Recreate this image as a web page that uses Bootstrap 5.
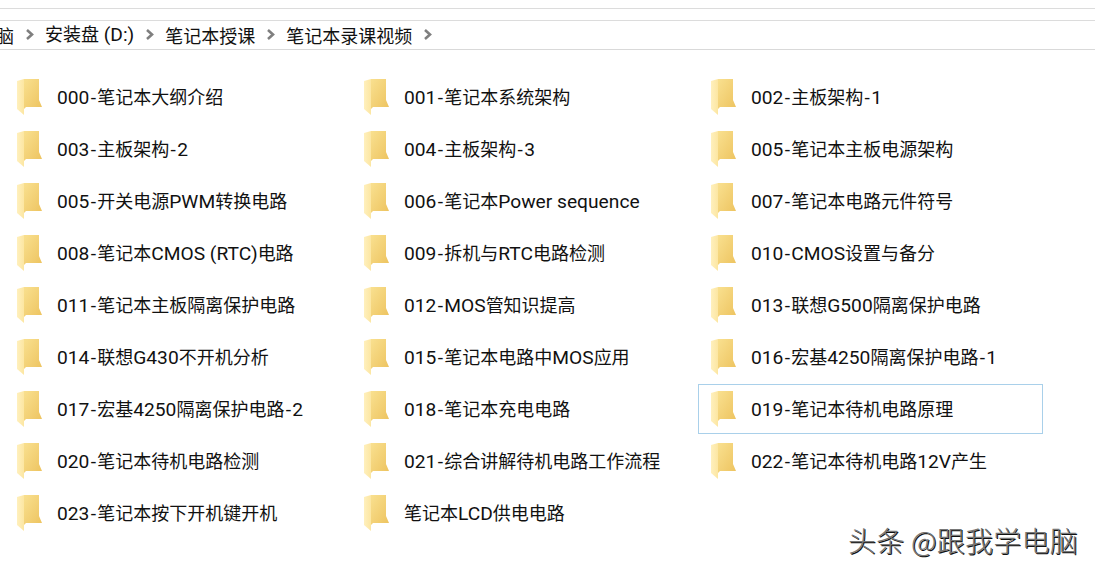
<!DOCTYPE html>
<html lang="zh-CN">
<head>
  <meta charset="UTF-8" />
  <meta name="viewport" content="width=device-width, initial-scale=1.0"/>
  <title>笔记本录课视频</title>
  <link href="https://cdn.jsdelivr.net/npm/bootstrap@5.3.2/dist/css/bootstrap.min.css" rel="stylesheet"/>
  <style>
    body {
      background: #fff;
      color: #111;
      width: 1095px;
      height: 573px;
      overflow: hidden;
      font-family: "Noto Sans CJK SC", sans-serif;
      font-size: 18px;
    }
    .top-strip {
      height: 13px;
      margin-top: 8px;
      border-top: 1px solid #dcdcdc;
      border-bottom: 1px solid #dcdcdc;
    }
    .crumbs {
      height: 29px;
      border-bottom: 1px solid #d9d9d9;
      margin-left: -4px;
      line-height: 1;
      padding-bottom: 1px;
    }
    .chev { width: 9px; height: 11px; margin: 0 11px; }
    .file-grid {
      display: grid;
      grid-template-columns: repeat(3, 345px);
      column-gap: 2px;
      grid-auto-rows: 50px;
      row-gap: 2px;
      padding: 22px 0 0 4px;
    }
    .file-item {
      padding-left: 12px;
      border: 1px solid transparent;
      line-height: 1;
    }
    .file-item.picked { border-color: #a9d0ea; }
    .folder-ic { width: 26px; height: 38px; margin-right: 14px; flex: none; }
    .latin { font-family: Roboto, sans-serif; font-size: 19.2px; }
    .dash { padding: 0 1.3px; }
    .mark-text {
      right: 17px;
      top: 526px;
      font-size: 28px;
      letter-spacing: .25px;
      line-height: 1;
      font-weight: 300;
      color: #777;
      text-shadow: 1px 1px 0 #111, -1px -1px 0 #fff;
    }
  </style>
</head>
<body class="position-relative">

  <div class="top-strip"></div>

  <!-- Address bar -->
  <div id="crumbs" class="crumbs d-flex align-items-center text-nowrap"></div>

  <!-- Folder list -->
  <div id="fileGrid" class="file-grid"></div>

  <div class="mark-text position-absolute text-nowrap">头条 @跟我学电脑</div>

  <svg width="0" height="0" class="position-absolute">
    <defs>
      <linearGradient id="backFill" x1="0" y1="0" x2="1" y2="1">
        <stop offset="0" stop-color="#f9e08f"/>
        <stop offset="1" stop-color="#edc35f"/>
      </linearGradient>
      <linearGradient id="flapFill" x1="0" y1="0" x2="1" y2="0">
        <stop offset="0" stop-color="#fff0bd"/>
        <stop offset="1" stop-color="#fce6a2"/>
      </linearGradient>
    </defs>
  </svg>

  <script src="https://cdn.jsdelivr.net/npm/bootstrap@5.3.2/dist/js/bootstrap.bundle.min.js"></script>
  <script>
    const crumbs = ["脑", "安装盘 (D:)", "笔记本授课", "笔记本录课视频"];
    const folders = [
      "000-笔记本大纲介绍", "001-笔记本系统架构", "002-主板架构-1",
      "003-主板架构-2", "004-主板架构-3", "005-笔记本主板电源架构",
      "005-开关电源PWM转换电路", "006-笔记本Power sequence", "007-笔记本电路元件符号",
      "008-笔记本CMOS (RTC)电路", "009-拆机与RTC电路检测", "010-CMOS设置与备分",
      "011-笔记本主板隔离保护电路", "012-MOS管知识提高", "013-联想G500隔离保护电路",
      "014-联想G430不开机分析", "015-笔记本电路中MOS应用", "016-宏基4250隔离保护电路-1",
      "017-宏基4250隔离保护电路-2", "018-笔记本充电电路", "019-笔记本待机电路原理",
      "020-笔记本待机电路检测", "021-综合讲解待机电路工作流程", "022-笔记本待机电路12V产生",
      "023-笔记本按下开机键开机", "笔记本LCD供电电路"
    ];

    const chevron = `<svg class="chev" viewBox="0 0 9 11"><path d="M2 1l5 4.5L2 10" fill="none" stroke="#7f7f7f" stroke-width="2.6"/></svg>`;
    const folderIcon = `<svg class="folder-ic" viewBox="0 0 26 38">
      <path d="M7 1H22V22L25 29H9L7 31Z" fill="url(#backFill)"/>
      <path d="M0 3L7 1V37L0 31Z" fill="url(#flapFill)"/>
    </svg>`;

    // latin runs are set a bit larger than the cjk ones, the hyphen is wider in the original font
    function withLatin(text) {
      return text.replace(/[\x00-\x7f]+/g, m =>
        `<span class="latin">${m.replace(/-/g, '<span class="dash">-</span>')}</span>`);
    }

    document.getElementById("crumbs").innerHTML = crumbs.map(c => `<span>${withLatin(c)}</span>${chevron}`).join("");

    document.getElementById("fileGrid").innerHTML = folders.map(name => `
      <div class="file-item d-flex align-items-center text-nowrap${name.startsWith("019") ? " picked" : ""}">
        ${folderIcon}<span>${withLatin(name)}</span>
      </div>`).join("");
  </script>

</body>
</html>
